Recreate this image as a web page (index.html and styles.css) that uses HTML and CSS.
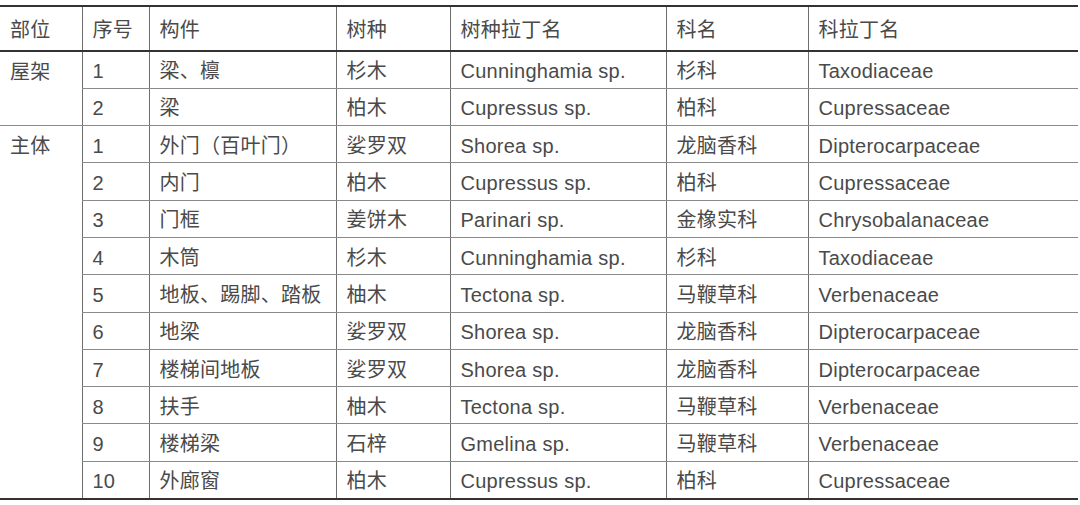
FILE: index.html
```html
<!DOCTYPE html>
<html lang="zh">
<head>
<meta charset="utf-8">
<link rel="stylesheet" href="styles.css">
</head>
<body>
<table class="wood">
  <colgroup>
    <col class="c1"><col class="c2"><col class="c3"><col class="c4"><col class="c5"><col class="c6"><col class="c7">
  </colgroup>
  <thead>
    <tr><th>部位</th><th>序号</th><th>构件</th><th>树种</th><th>树种拉丁名</th><th>科名</th><th>科拉丁名</th></tr>
  </thead>
  <tbody>
    <tr><td class="group" rowspan="2">屋架</td><td>1</td><td>梁、檩</td><td>杉木</td><td>Cunninghamia sp.</td><td>杉科</td><td>Taxodiaceae</td></tr>
    <tr><td>2</td><td>梁</td><td>柏木</td><td>Cupressus sp.</td><td>柏科</td><td>Cupressaceae</td></tr>
    <tr><td class="group last" rowspan="10">主体</td><td>1</td><td>外门（百叶门）</td><td>娑罗双</td><td>Shorea sp.</td><td>龙脑香科</td><td>Dipterocarpaceae</td></tr>
    <tr><td>2</td><td>内门</td><td>柏木</td><td>Cupressus sp.</td><td>柏科</td><td>Cupressaceae</td></tr>
    <tr><td>3</td><td>门框</td><td>姜饼木</td><td>Parinari sp.</td><td>金橡实科</td><td>Chrysobalanaceae</td></tr>
    <tr><td>4</td><td>木筒</td><td>杉木</td><td>Cunninghamia sp.</td><td>杉科</td><td>Taxodiaceae</td></tr>
    <tr><td>5</td><td>地板、踢脚、踏板</td><td>柚木</td><td>Tectona sp.</td><td>马鞭草科</td><td>Verbenaceae</td></tr>
    <tr><td>6</td><td>地梁</td><td>娑罗双</td><td>Shorea sp.</td><td>龙脑香科</td><td>Dipterocarpaceae</td></tr>
    <tr><td>7</td><td>楼梯间地板</td><td>娑罗双</td><td>Shorea sp.</td><td>龙脑香科</td><td>Dipterocarpaceae</td></tr>
    <tr><td>8</td><td>扶手</td><td>柚木</td><td>Tectona sp.</td><td>马鞭草科</td><td>Verbenaceae</td></tr>
    <tr><td>9</td><td>楼梯梁</td><td>石梓</td><td>Gmelina sp.</td><td>马鞭草科</td><td>Verbenaceae</td></tr>
    <tr class="end"><td>10</td><td>外廊窗</td><td>柏木</td><td>Cupressus sp.</td><td>柏科</td><td>Cupressaceae</td></tr>
  </tbody>
</table>
</body>
</html>
```
FILE: styles.css
```css
html, body {
  margin: 0;
  padding: 0;
  background: #ffffff;
}
body {
  padding-top: 5px;
}
.wood {
  border-collapse: collapse;
  table-layout: fixed;
  width: 1078px;
  font-family: "Liberation Sans", "Noto Sans CJK SC", sans-serif;
  font-size: 20px;
  letter-spacing: 0.25px;
  color: #4a4a4a;
  border-top: 2px solid #333333;
}
.c1 { width: 82px; }
.c2 { width: 67px; }
.c3 { width: 187px; }
.c4 { width: 114px; }
.c5 { width: 216px; }
.c6 { width: 142px; }
.c7 { width: 270px; }
.wood th,
.wood td {
  padding: 3px 0 0 10px;
  text-align: left;
  font-weight: normal;
  white-space: nowrap;
  vertical-align: middle;
  line-height: 24px;
  border-left: 1px solid #6e6e6e;
}
.wood th:first-child,
.wood td.group {
  border-left: none;
}
.wood thead tr {
  height: 45px;
}
.wood th {
  border-bottom: 2px solid #333333;
}
.wood tbody tr {
  height: 37.3px;
}
.wood td {
  border-bottom: 1px solid #8a8a8a;
}
.wood td.group {
  vertical-align: top;
  padding-top: 8px;
}
.wood td.group.last,
.wood tr.end td {
  border-bottom: 2px solid #333333;
}
```
